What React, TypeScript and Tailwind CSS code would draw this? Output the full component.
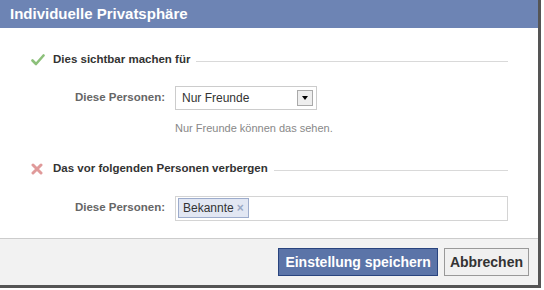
import React from "react";

function Check() {
  return (
    <svg width="14" height="12" viewBox="0 0 14 12">
      <path d="M1.5 6.5 L5 10 L12.5 1.5" stroke="#8cc07a" strokeWidth="2.6" fill="none" strokeLinecap="round" strokeLinejoin="round" />
    </svg>
  );
}

function Cross() {
  return (
    <svg width="12" height="12" viewBox="0 0 12 12">
      <path d="M2 2 L10 10 M10 2 L2 10" stroke="#e09a9a" strokeWidth="3" fill="none" strokeLinecap="round" />
    </svg>
  );
}

export default function App() {
  const font = { fontFamily: '"Liberation Sans", Arial, sans-serif' };
  return (
    <div className="w-[544px] h-[290px] bg-white relative overflow-hidden" style={font}>
      <div className="w-[541px] h-[288px] flex flex-col border-r-[3px] border-b-[3px] border-[#555]">
        <div className="h-[28px] bg-[#6d84b4] flex items-center pl-[10px] text-white font-bold text-[15px]">
          Individuelle Privatsphäre
        </div>
        <div className="flex-1 flex flex-col pl-[31px] pr-[30px]">
          <div className="flex items-center mt-[24px] h-[16px]">
            <div className="w-[22px] flex items-center"><Check /></div>
            <span className="text-[11.5px] font-bold text-[#333] whitespace-nowrap">Dies sichtbar machen für</span>
            <div className="flex-1 h-px bg-[#d9d9d9] ml-[6px] mt-[3px]" />
          </div>
          <div className="flex items-center mt-[18px]">
            <span className="w-[144px] text-right text-[11.5px] font-bold text-[#666] pr-[10px]">Diese Personen:</span>
            <div className="w-[142px] h-[24px] border border-[#ccc] flex items-center justify-between pl-[6px] pr-[3px] text-[12px] text-[#333]">
              <span>Nur Freunde</span>
              <div className="w-[16px] h-[16px] border border-[#aaa] bg-[#eee] flex items-center justify-center">
                <div className="w-0 h-0 border-l-[3px] border-r-[3px] border-t-[4px] border-l-transparent border-r-transparent border-t-black" />
              </div>
            </div>
          </div>
          <div className="ml-[144px] mt-[10px] text-[11px] text-[#888]">Nur Freunde können das sehen.</div>
          <div className="flex items-center mt-[24px] h-[16px]">
            <div className="w-[22px] flex items-center"><Cross /></div>
            <span className="text-[11.5px] font-bold text-[#333] whitespace-nowrap">Das vor folgenden Personen verbergen</span>
            <div className="flex-1 h-px bg-[#d9d9d9] ml-[6px] mt-[3px]" />
          </div>
          <div className="flex items-center mt-[19px]">
            <span className="w-[144px] text-right text-[11.5px] font-bold text-[#666] pr-[10px]">Diese Personen:</span>
            <div className="flex-1 h-[25px] border border-[#d4d4d4] flex items-center pl-[2px]">
              <div className="h-[20px] border border-[#9daccc] bg-[#e2e7f3] flex items-center px-[4px] text-[12px] text-[#333] gap-[3px]">
                <span>Bekannte</span>
                <span className="text-[#9aa8c4] text-[12px] font-bold leading-none">×</span>
              </div>
            </div>
          </div>
        </div>
        <div className="h-[47px] bg-[#f2f2f2] border-t border-[#ccc] flex items-center justify-end pr-[9px] gap-[6px]">
          <div className="h-[28px] px-[6px] bg-[#5b74a8] border border-[#29447e] text-white font-bold text-[14px] flex items-center">
            Einstellung speichern
          </div>
          <div className="h-[28px] px-[5px] bg-[#f0f0f0] border border-[#999] text-[#333] font-bold text-[14px] flex items-center">
            Abbrechen
          </div>
        </div>
      </div>
    </div>
  );
}
